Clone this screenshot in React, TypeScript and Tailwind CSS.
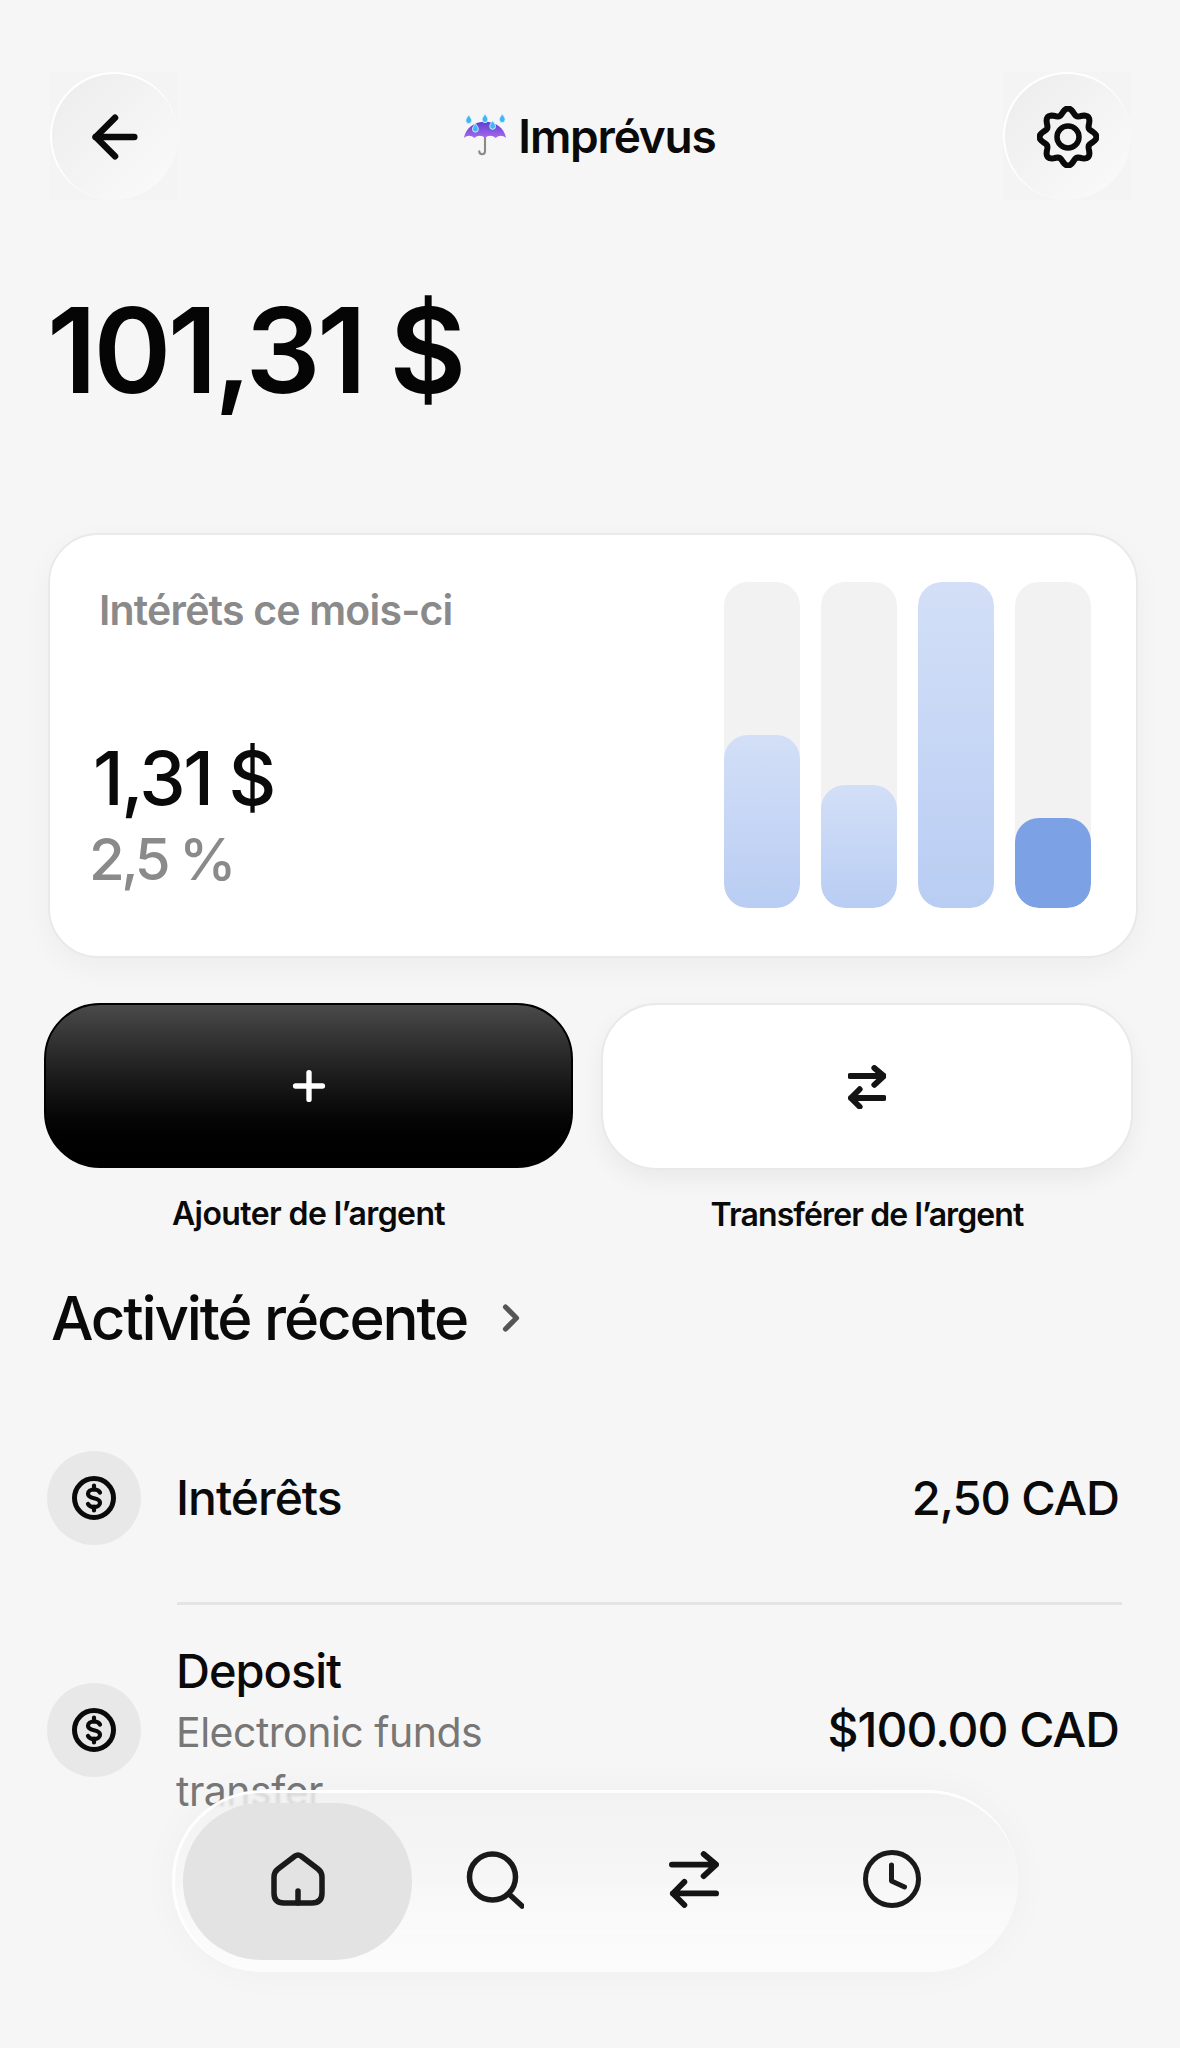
import { ArrowLeft, ChevronRight, Plus } from "lucide-react";

// wavy 8-lobed outline of the settings badge
const gearPath =
  Array.from({ length: 96 }, (_, i) => {
    const t = (i / 96) * Math.PI * 2;
    const r = 25.500 + 3 * Math.cos(8 * t);
    const x = 31 + r * Math.sin(t);
    const y = 31 - r * Math.cos(t);
    return `${i === 0 ? "M" : "L"}${x.toFixed(2)} ${y.toFixed(2)}`;
  }).join(" ") + "Z";

function RainUmbrella() {
  return (
    <svg width="46" height="48" viewBox="0 0 48 48" fill="none">
      <defs>
        <linearGradient id="canopy" x1="0" y1="0" x2="0" y2="1">
          <stop offset="0" stopColor="#5b3fd0" />
          <stop offset="1" stopColor="#a868ee" />
        </linearGradient>
      </defs>
      <path d="M24 25v15c0 4-6 4-6 0" stroke="#8a8a8a" strokeWidth="2.200" strokeLinecap="round" />
      <path d="M2 26C4 15 13 9 24 9s20 6 22 17c-4-3-7-3-11 0-3-3-8-3-11 0-3-3-8-3-11 0-4-3-7-3-11 0z" fill="url(#canopy)" />
      <path d="M7 2c2 3 3 4 3 6a3 3 0 0 1-6 0c0-2 1-3 3-6zM24 1c2 3 3 4 3 6a3 3 0 0 1-6 0c0-2 1-3 3-6zM42 1c2 3 3 4 3 6a3 3 0 0 1-6 0c0-2 1-3 3-6zM14 11c2 3 3 4 3 6a3 3 0 0 1-6 0c0-2 1-3 3-6zM32 8c2 3 3 4 3 6a3 3 0 0 1-6 0c0-2 1-3 3-6z" fill="#45b4f2" stroke="#d4eefc" strokeWidth="1" />
    </svg>
  );
}

function GearBadge() {
  return (
    <svg width="62" height="62" viewBox="0 0 62 62" fill="none" stroke="#0a0a0a" strokeWidth="6" strokeLinejoin="round">
      <path d={gearPath} />
      <circle cx="31" cy="31" r="11" strokeWidth="5.500" />
    </svg>
  );
}

function SwapIcon({ width, height, stroke }: { width: number; height: number; stroke: number }) {
  return (
    <svg width={width} height={height} viewBox="0 0 52 60" fill="none" stroke="#141414" strokeWidth={stroke} strokeLinecap="round" strokeLinejoin="round">
      <path d="M3 15H49M36 4l13 11-13 12" />
      <path d="M49 45H4M16 33L4 45l12 12" />
    </svg>
  );
}

function DollarIcon() {
  return (
    <svg width="46" height="46" viewBox="0 0 46 46" fill="none" stroke="#0a0a0a" strokeLinecap="round">
      <circle cx="23" cy="23" r="19.500" strokeWidth="5" />
      <path d="M29 17.500c-1-2-3-3-6-3-3.500 0-6 1.800-6 4.300 0 2.800 2.500 3.700 6 4.500s6 1.700 6 4.400c0 2.500-2.500 4.300-6 4.300-3 0-5-1-6-3" strokeWidth="4.200" />
      <path d="M23 10.500v4M23 31.500v4" strokeWidth="4.200" />
    </svg>
  );
}

function HomeIcon() {
  return (
    <svg width="54" height="54" viewBox="0 0 54 54" fill="none" stroke="#1a1a1a" strokeWidth="5.500" strokeLinecap="round" strokeLinejoin="round">
      <path d="M24 4Q27 2 30 4L47 17Q51 20 51 25V41Q51 51 41 51H13Q3 51 3 41V25Q3 20 7 17Z" />
      <path d="M27 39V51" />
    </svg>
  );
}

function SearchIcon() {
  return (
    <svg width="60" height="60" viewBox="0 0 60 60" fill="none" stroke="#1a1a1a" strokeWidth="5.500" strokeLinecap="round">
      <circle cx="28.500" cy="28" r="23" />
      <path d="M46 46L58 57" />
    </svg>
  );
}

function ClockIcon() {
  return (
    <svg width="60" height="60" viewBox="0 0 60 60" fill="none" stroke="#1a1a1a" strokeWidth="5" strokeLinecap="round" strokeLinejoin="round">
      <circle cx="30" cy="30" r="26.500" />
      <path d="M29.500 16V32L42.500 38" />
    </svg>
  );
}

function IconCircle({ children }: { children: React.ReactNode }) {
  return (
    <div className="flex h-[128px] w-[128px] items-center justify-center bg-[#f4f4f4]">
      <div className="flex h-[128px] w-[128px] items-center justify-center rounded-full border-t-2 border-l-2 border-white bg-gradient-to-br from-[#ececec] to-[#fbfbfb] text-[#0a0a0a]">
        {children}
      </div>
    </div>
  );
}

function Bar({ fill, solid }: { fill: string; solid?: boolean }) {
  return (
    <div className="relative h-[326px] w-[76px] overflow-hidden rounded-[24px] bg-[#f2f2f2]">
      <div
        className={
          solid
            ? "absolute bottom-0 left-0 w-full rounded-[24px] bg-[#7ca1e4]"
            : "absolute bottom-0 left-0 w-full rounded-[24px] bg-gradient-to-b from-[#d3dff7] to-[#b9cdf3]"
        }
        style={{ height: fill }}
      />
    </div>
  );
}

function Money() {
  return (
    <div className="flex h-[94px] w-[94px] shrink-0 items-center justify-center rounded-full bg-[#e8e8e8]">
      <DollarIcon />
    </div>
  );
}

export default function App() {
  return (
    <div className="relative h-[2048px] w-[1180px] overflow-hidden bg-[#f6f6f6] font-['Inter',sans-serif] text-[#0a0a0a]">
      <header className="flex items-center justify-between pt-[72px] pr-[49px] pl-[50px]">
        <IconCircle>
          <ArrowLeft size={66} strokeWidth={2.400} />
        </IconCircle>
        <div className="flex items-center gap-[10px] pr-[3px]">
          <RainUmbrella />
          <span className="text-[46px] leading-none font-semibold tracking-[-1.200px]">Imprévus</span>
        </div>
        <IconCircle>
          <GearBadge />
        </IconCircle>
      </header>

      <div className="mt-[80px] pl-[47px] text-[118px] leading-[140px] font-semibold tracking-[-3.500px] text-[#050505]">101,31 $</div>

      <section className="mt-[113px] ml-[48px] flex h-[425px] w-[1090px] justify-between rounded-[50px] border-2 border-[#e9e9e9] bg-white pt-[47px] pr-[45px] pl-[38px] shadow-[0_10px_30px_rgba(0,0,0,0.04)]">
        <div className="flex flex-col">
          <div className="mt-[3px] pl-[11px] text-[41px] leading-[50px] font-semibold tracking-[-0.800px] text-[#8a8a8a]">Intérêts ce mois-ci</div>
          <div className="mt-[102px] pl-[5px] text-[74px] leading-[82px] font-medium tracking-[-2.500px]">1,31 $</div>
          <div className="mt-[4px] pl-[1px] text-[58px] leading-[72px] font-medium tracking-[-3.500px] text-[#8a8a8a]">2,5 %</div>
        </div>
        <div className="flex gap-[21px]">
          <Bar fill="173px" />
          <Bar fill="123px" />
          <Bar fill="326px" />
          <Bar fill="90px" solid />
        </div>
      </section>

      <div className="mt-[45px] flex gap-[28px] pl-[44px]">
        <div className="flex w-[529px] flex-col items-center">
          <button className="flex h-[165px] w-full items-center justify-center rounded-[56px] border-2 border-black bg-gradient-to-b from-[#4a4a4a] to-black text-white">
            <Plus size={46} strokeWidth={2.800} />
          </button>
          <div className="mt-[28px] text-[32px] leading-[36px] font-semibold tracking-[-0.600px]">Ajouter de l’argent</div>
        </div>
        <div className="flex w-[532px] flex-col items-center">
          <button className="flex h-[167px] w-full items-center justify-center rounded-[56px] border-2 border-[#e9e9e9] bg-white shadow-[0_10px_24px_rgba(0,0,0,0.05)]">
            <SwapIcon width={38} height={44} stroke={8} />
          </button>
          <div className="mt-[27px] text-[32px] leading-[36px] font-semibold tracking-[-0.900px]">Transférer de l’argent</div>
        </div>
      </div>

      <div className="mt-[52px] flex items-center gap-[22px] pl-[51px]">
        <span className="text-[60px] leading-[66px] font-medium tracking-[-2.200px]">Activité récente</span>
        <ChevronRight size={44} strokeWidth={2.800} color="#555555" />
      </div>

      <div className="mt-[100px] flex items-center pr-[61px] pl-[47px]">
        <Money />
        <span className="ml-[35px] text-[48px] leading-[52px] font-medium tracking-[-1px]">Intérêts</span>
        <span className="ml-auto text-[47px] leading-[52px] font-medium tracking-[-1px]">2,50 CAD</span>
      </div>

      <div className="mt-[57px] mr-[58px] ml-[177px] h-[3px] bg-[#e4e4e4]" />

      <div className="relative mt-[40px] flex items-center pr-[61px] pl-[47px]">
        <Money />
        <div className="ml-[35px] -mb-[6px] w-[340px]">
          <div className="text-[47px] leading-[52px] font-medium tracking-[-1px]">Deposit</div>
          <div className="mt-[6px] text-[41px] leading-[59px] tracking-[-0.500px] text-[#777777]">Electronic funds transfer</div>
        </div>
        <span className="ml-auto text-[48px] leading-[52px] font-medium tracking-[-1px]">$100.00 CAD</span>
      </div>

      {/* tab bar floats over the list */}
      <nav className="absolute top-[1790px] left-[172px] flex h-[182px] w-[846px] items-center rounded-[90px] border-t-[3px] border-l-[3px] border-white/90 bg-gradient-to-b from-[#f0f0f0]/80 to-[#fcfcfc] pb-[3px] pl-[8px] shadow-[0_0_40px_rgba(0,0,0,0.03)] backdrop-blur-[1px]">
        <div className="flex h-[157px] w-[229px] items-center justify-center rounded-[78px] bg-[#e3e3e3] pb-[5px]">
          <HomeIcon />
        </div>
        <div className="flex w-[164px] justify-center pb-[5px]">
          <SearchIcon />
        </div>
        <div className="flex w-[236px] justify-center pb-[5px]">
          <SwapIcon width={50} height={58} stroke={6} />
        </div>
        <div className="flex w-[159px] justify-center pb-[5px]">
          <ClockIcon />
        </div>
      </nav>
    </div>
  );
}
